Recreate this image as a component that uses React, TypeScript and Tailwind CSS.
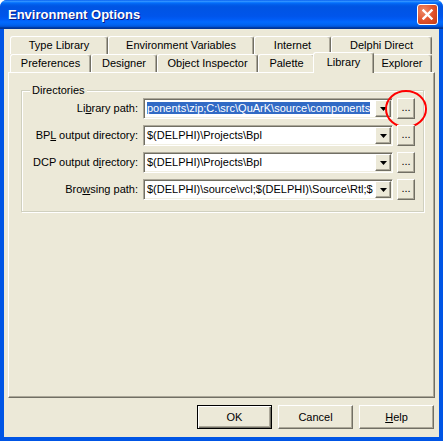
import type { ReactNode } from 'react';

const tabsTop = [
    { label: 'Type Library', w: 'w-[98px]' },
    { label: 'Environment Variables', w: 'w-[146px]' },
    { label: 'Internet', w: 'w-[77px]' },
    { label: 'Delphi Direct', w: 'w-[101px]' },
];

const tabsBottom = [
    { label: 'Preferences', w: 'w-[81px]', active: false },
    { label: 'Designer', w: 'w-[66px]', active: false },
    { label: 'Object Inspector', w: 'w-[101px]', active: false },
    { label: 'Palette', w: 'w-[57px]', active: false },
    { label: 'Library', w: 'w-[61px]', active: true },
    { label: 'Explorer', w: 'w-[60px]', active: false },
];

const raised =
    'border border-t-white border-l-white border-r-[#716F64] border-b-[#716F64] shadow-[inset_-1px_-1px_0_#ACA899] bg-[#ECE9D8]';

function Tab({ label, w, active }: { label: string; w: string; active?: boolean }) {
    if (active) {
        return (
            <div className={`${w} relative z-10 -mx-[2px] -mb-[1px] flex h-[21px] items-center justify-center rounded-t-[3px] border-l border-t border-white border-r border-r-[#716F64] bg-[#ECE9D8] pb-[2px] shadow-[inset_-1px_0_0_#ACA899]`}>
                {label}
            </div>
        );
    }
    return (
        <div className={`${w} flex h-[18px] items-center justify-center rounded-t-[3px] border-l border-t border-white border-r border-r-[#716F64] shadow-[inset_-1px_0_0_#ACA899]`}>
            {label}
        </div>
    );
}

function DropButton() {
    return (
        <div className={`flex h-[17px] w-[16px] shrink-0 items-center justify-center ${raised}`}>
            <svg width="7" height="4" viewBox="0 0 7 4">
                <polygon points="0,0 7,0 3.5,4" fill="#000" />
            </svg>
        </div>
    );
}

function Combo({ value, selected }: { value: string; selected?: boolean }) {
    return (
        <div className="flex h-[21px] w-[250px] items-center border border-t-[#ACA899] border-l-[#ACA899] border-b-white border-r-white bg-white p-[1px] shadow-[inset_1px_1px_0_#716F64,inset_-1px_-1px_0_#F1EFE2]">
            <div className="flex-1 overflow-hidden whitespace-nowrap pl-[2px] leading-[13px]">
                <span className={selected ? 'bg-[#316AC5] text-white' : ''}>{value}</span>
            </div>
            <DropButton />
        </div>
    );
}

function Row({ label, value, selected, circled }: { label: ReactNode; value: string; selected?: boolean; circled?: boolean }) {
    return (
        <div className="flex h-[21px] items-center">
            <div className="w-[116px] text-right">{label}</div>
            <div className="ml-[5px]">
                <Combo value={value} selected={selected} />
            </div>
            <div className={`relative ml-[4px] flex h-[21px] w-[18px] items-center justify-center pb-[3px] ${raised}`}>
                ...
                {circled && (
                    <svg className="absolute left-1/2 top-1/2 -translate-x-1/2 -translate-y-1/2" width="46" height="42" viewBox="0 0 46 42">
                        <ellipse cx="23" cy="21" rx="20" ry="18" fill="none" stroke="#FF0000" strokeWidth="2" />
                    </svg>
                )}
            </div>
        </div>
    );
}

function DialogButton({ children, isDefault }: { children: ReactNode; isDefault?: boolean }) {
    if (isDefault) {
        return (
            <div className="flex h-[24px] w-[75px] items-center justify-center border border-black bg-[#ECE9D8] shadow-[inset_1px_1px_0_white,inset_-1px_-1px_0_#716F64,inset_-2px_-2px_0_#ACA899]">
                {children}
            </div>
        );
    }
    return <div className={`flex h-[24px] w-[75px] items-center justify-center ${raised}`}>{children}</div>;
}

export default function App() {
    return (
        <div className="flex h-[441px] w-[443px] flex-col overflow-hidden rounded-t-[7px] bg-[#0055E5] font-['Liberation_Sans',Arial,sans-serif] text-[11px] text-black">
            {/* title bar */}
            <div className="flex h-[29px] shrink-0 items-center justify-between bg-[linear-gradient(to_bottom,#0058EE_0%,#3593FF_4%,#288EFF_6%,#127DFF_8%,#036FFC_10%,#0262EE_14%,#0057E5_20%,#0054E3_24%,#0055EB_56%,#005BF5_66%,#026AFE_76%,#0062EF_86%,#0052D6_92%,#0040AB_94%,#003092_100%)] pl-[8px] pr-[5px]">
                <span className="text-[13px] font-bold text-white [text-shadow:1px_1px_0_#0A1883]">Environment Options</span>
                <div className="flex h-[21px] w-[21px] items-center justify-center rounded-[3px] border border-white bg-[radial-gradient(circle_at_30%_30%,#EE8A68,#E0502A_55%,#C33C16)]">
                    <svg width="11" height="11" viewBox="0 0 11 11">
                        <path d="M1.5 1.5 L9.5 9.5 M9.5 1.5 L1.5 9.5" stroke="#fff" strokeWidth="2.4" strokeLinecap="square" />
                    </svg>
                </div>
            </div>

            {/* body */}
            <div className="mx-[4px] mb-[4px] flex flex-1 flex-col bg-[#ECE9D8] px-[4px] pt-[7px]">
                <div className="flex pl-[2px]">
                    {tabsTop.map((t) => (
                        <Tab key={t.label} label={t.label} w={t.w} />
                    ))}
                </div>
                <div className="flex h-[18px] items-end pl-[2px]">
                    {tabsBottom.map((t) => (
                        <Tab key={t.label} label={t.label} w={t.w} active={t.active} />
                    ))}
                </div>

                <div className="flex-1 border-l border-t border-white border-r border-b border-r-[#716F64] border-b-[#716F64] pl-[12px] pr-[10px] pt-[17px] shadow-[inset_-1px_-1px_0_#ACA899]">
                    {/* group box */}
                    <div className="relative border border-[#D0D0BF] pb-[11px] pt-[7px] shadow-[1px_1px_0_white,inset_1px_1px_0_white]">
                        <span className="absolute -top-[7px] left-[8px] bg-[#ECE9D8] px-[2px] leading-[13px]">Directories</span>
                        <div className="flex flex-col gap-[6px]">
                            <Row
                                label={<>Li<span className="underline">b</span>rary path:</>}
                                value="ponents\zip;C:\src\QuArK\source\components"
                                selected
                                circled
                            />
                            <Row
                                label={<>BP<span className="underline">L</span> output directory:</>}
                                value="$(DELPHI)\Projects\Bpl"
                            />
                            <Row
                                label={<>DCP output d<span className="underline">i</span>rectory:</>}
                                value="$(DELPHI)\Projects\Bpl"
                            />
                            <Row
                                label={<>Bro<span className="underline">w</span>sing path:</>}
                                value="$(DELPHI)\source\vcl;$(DELPHI)\Source\Rtl;$"
                            />
                        </div>
                    </div>
                </div>

                <div className="flex justify-end gap-[6px] pb-[8px] pr-[1px] pt-[7px]">
                    <DialogButton isDefault>OK</DialogButton>
                    <DialogButton>Cancel</DialogButton>
                    <DialogButton>
                        <span className="underline">H</span>elp
                    </DialogButton>
                </div>
            </div>
        </div>
    );
}
